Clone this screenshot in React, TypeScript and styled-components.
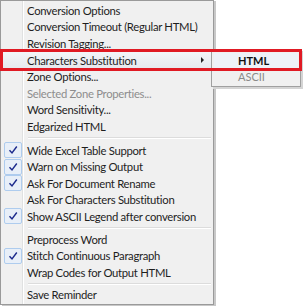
import React from "react";
import styled, { createGlobalStyle } from "styled-components";

const Global = createGlobalStyle`
  html, body { margin: 0; padding: 0; background: #ffffff; }
  body { width: 305px; height: 306px; overflow: hidden; font-family: Lato, "Open Sans", sans-serif; }
`;

const Stage = styled.div`
  position: relative;
  width: 305px;
  height: 306px;
  background: #ffffff;
`;

const Menu = styled.div`
  box-sizing: border-box;
  width: 214px;
  height: 305px;
  background:
    linear-gradient(to right, transparent 21px, #e0e1e1 21px, #e0e1e1 22px, #ffffff 22px, #ffffff 23px, transparent 23px),
    #f0f0f0;
  border: 1px solid #9a9a9a;
  padding: 1px 2px 1px 1px;
  box-shadow: 2px 1px 0 #c8c8c8;
  display: flex;
  flex-direction: column;
`;

const Row = styled.div<{ $disabled?: boolean; $hot?: boolean }>`
  height: 16.6px;
  display: flex;
  align-items: center;
  padding-left: 2px;
  font-size: 11.3px;
  letter-spacing: -0.3px;
  color: ${(p) => (p.$disabled ? "#8d8d8d" : "#1e1e1e")};
  background: ${(p) => (p.$hot ? "linear-gradient(#f3f5f8, #e6e9ee)" : "transparent")};
  white-space: nowrap;
`;

const CheckSlot = styled.div<{ $on?: boolean }>`
  width: 18px;
  height: 16px;
  margin-right: 5px;
  flex: none;
  box-sizing: border-box;
  border: 1px solid ${(p) => (p.$on ? "#aeccee" : "transparent")};
  border-radius: 2px;
  background: ${(p) => (p.$on ? "#e8eff8" : "transparent")};
  display: flex;
  align-items: center;
  justify-content: center;
`;

const Arrow = styled.div`
  margin-left: auto;
  margin-right: 7px;
  width: 0;
  height: 0;
  border-top: 3px solid transparent;
  border-bottom: 3px solid transparent;
  border-left: 3px solid #222;
`;

const Sep = styled.div<{ $h: number }>`
  height: ${(p) => p.$h}px;
  display: flex;
  align-items: center;
  padding-left: 26px;
  &::after {
    content: "";
    flex: 1;
    height: 1px;
    background: #dcdcdc;
    border-bottom: 1px solid #ffffff;
  }
`;

const Sub = styled.div`
  position: absolute;
  left: 211px;
  top: 49px;
  width: 90px;
  height: 38px;
  box-sizing: border-box;
  background: #f0f0f0;
  border: 1px solid #a0a0a0;
  padding: 3px 2px 2px 2px;
  box-shadow: 2px 2px 0 #d4d4d4;
  display: flex;
  flex-direction: column;
  gap: 2px;
`;

const SubItem = styled.div<{ $disabled?: boolean; $hot?: boolean }>`
  height: 15px;
  display: flex;
  align-items: center;
  padding-left: 24px;
  font-size: 11px;
  font-weight: ${(p) => (p.$hot ? 700 : 400)};
  color: ${(p) => (p.$disabled ? "#8a8a8a" : "#111")};
  background: ${(p) => (p.$hot ? "#eef2f8" : "transparent")};
`;

const RedBox = styled.div`
  position: absolute;
  left: 0;
  top: 49px;
  width: 302px;
  height: 22px;
  box-sizing: border-box;
  border: 3px solid #e01a24;
  pointer-events: none;
`;

const Tick = () => (
  <svg width="10" height="10" viewBox="0 0 10 10">
    <path d="M1.5 5.2 L4 8 L8.8 1.5" fill="none" stroke="#1c2a8c" strokeWidth="1.4" />
  </svg>
);

type Item = { t: string; check?: boolean; disabled?: boolean; sub?: boolean } | { sep: number };

const items: Item[] = [
  { t: "Conversion Options" },
  { t: "Conversion Timeout (Regular HTML)" },
  { t: "Revision Tagging..." },
  { t: "Characters Substitution", sub: true },
  { t: "Zone Options..." },
  { t: "Selected Zone Properties...", disabled: true },
  { t: "Word Sensitivity..." },
  { t: "Edgarized HTML" },
  { sep: 7 },
  { t: "Wide Excel Table Support", check: true },
  { t: "Warn on Missing Output", check: true },
  { t: "Ask For Document Rename", check: true },
  { t: "Ask For Characters Substitution" },
  { t: "Show ASCII Legend after conversion", check: true },
  { sep: 6 },
  { t: "Preprocess Word" },
  { t: "Stitch Continuous Paragraph", check: true },
  { t: "Wrap Codes for Output HTML" },
  { sep: 6 },
  { t: "Save Reminder" },
];

export default function App() {
  return (
    <Stage>
      <Global />
      <Menu>
        {items.map((it, i) =>
          "sep" in it ? (
            <Sep key={i} $h={it.sep} />
          ) : (
            <Row key={i} $disabled={it.disabled} $hot={it.sub}>
              <CheckSlot $on={it.check}>{it.check && <Tick />}</CheckSlot>
              {it.t}
              {it.sub && <Arrow />}
            </Row>
          )
        )}
      </Menu>
      <Sub>
        <SubItem $hot>HTML</SubItem>
        <SubItem $disabled>ASCII</SubItem>
      </Sub>
      <RedBox />
    </Stage>
  );
}
